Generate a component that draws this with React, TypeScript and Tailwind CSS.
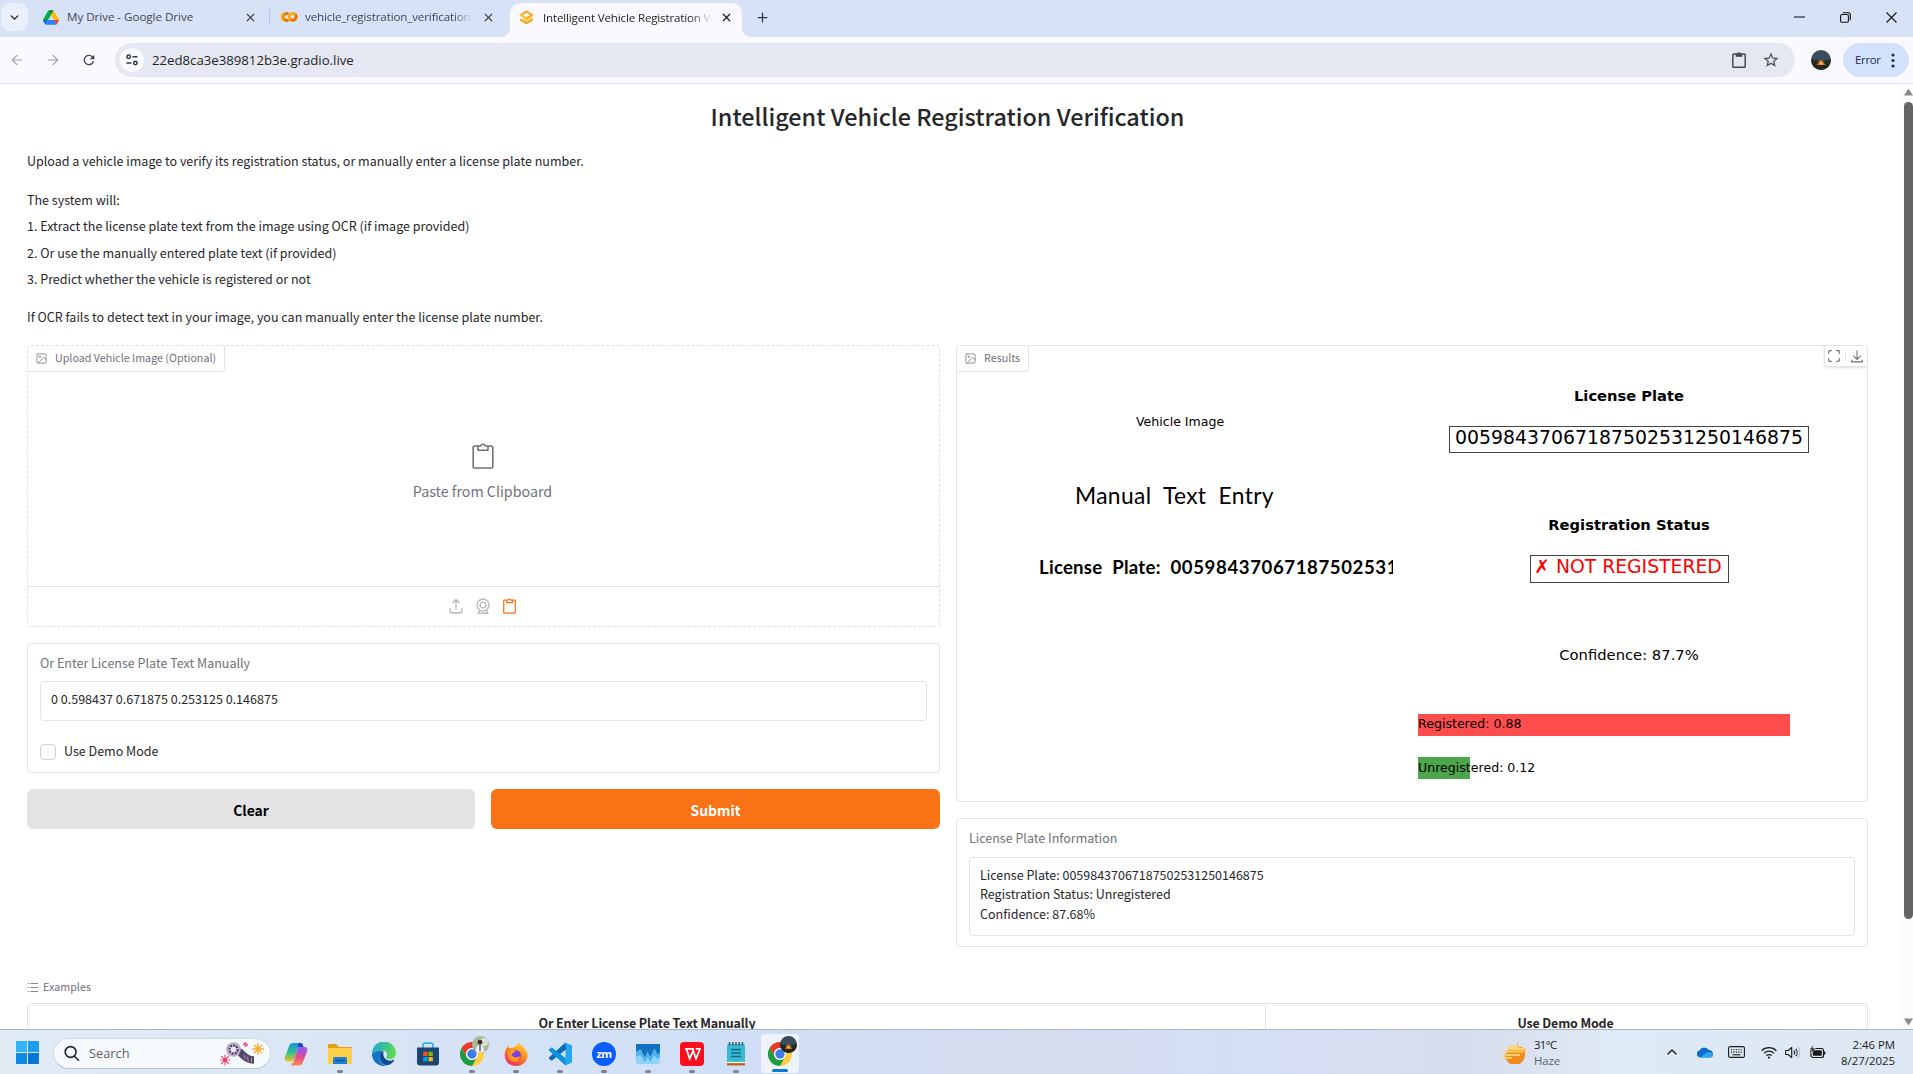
import type { ReactNode } from "react";
import { ArrowLeft, ArrowRight, ChevronDown, ChevronUp, Plus, X } from "lucide-react";

/* ---------- Browser chrome ---------- */

function DriveIcon() {
  return (
    <svg width="16" height="15" viewBox="0 0 87.3 78" className="shrink-0">
      <path d="m6.6 66.85 3.85 6.65c.8 1.4 1.95 2.5 3.3 3.3l13.75-23.8h-27.5c0 1.55.4 3.1 1.2 4.5z" fill="#0066da" />
      <path d="m43.65 25-13.75-23.8c-1.35.8-2.5 1.9-3.3 3.3l-25.4 44a9.06 9.06 0 0 0 -1.2 4.5h27.5z" fill="#00ac47" />
      <path d="m73.55 76.8c1.35-.8 2.5-1.9 3.3-3.3l1.6-2.75 7.65-13.25c.8-1.4 1.2-2.95 1.2-4.5h-27.5l5.85 11.5z" fill="#ea4335" />
      <path d="m43.65 25 13.75-23.8c-1.35-.8-2.9-1.2-4.5-1.2h-18.5c-1.6 0-3.15.45-4.5 1.2z" fill="#00832d" />
      <path d="m59.8 53h-32.3l-13.75 23.8c1.35.8 2.9 1.2 4.5 1.2h50.8c1.6 0 3.15-.45 4.5-1.2z" fill="#2684fc" />
      <path d="m73.4 26.5-12.7-22c-.8-1.4-1.95-2.5-3.3-3.3l-13.75 23.8 16.15 28h27.45c0-1.55-.4-3.1-1.2-4.5z" fill="#ffba00" />
    </svg>
  );
}

function ColabIcon() {
  return (
    <svg width="17" height="12" viewBox="0 0 17 12" className="shrink-0" fill="none" strokeWidth="2.7">
      <path d="M7.6 2.9A3.5 3.5 0 1 0 7.6 8.9" stroke="#e8710a" />
      <path d="M3 9.2A3.5 3.5 0 0 1 3 2.8" stroke="#f9ab00" />
      <circle cx="11.9" cy="5.9" r="3.6" stroke="#f9ab00" />
      <path d="M9.4 8.4A3.6 3.6 0 0 0 14.4 3.4" stroke="#e8710a" />
    </svg>
  );
}

function GradioIcon() {
  return (
    <svg width="15" height="15" viewBox="0 0 15 15" className="shrink-0" fill="none" strokeLinejoin="round" strokeLinecap="round">
      <path d="M7.5 1.6 1.8 5 7.5 8.3 13.2 5z" stroke="#ff9d12" strokeWidth="2" fill="#fff" />
      <path d="M1.8 5 7.5 8.300" stroke="#ffc938" strokeWidth="2" />
      <path d="M1.8 9.800 7.500 13.100l5.700-3.300" stroke="#ff9d12" strokeWidth="2" />
      <path d="M4.600 9 7.500 10.700 13 7.600" stroke="#ffc938" strokeWidth="1.500" />
    </svg>
  );
}

function TabStrip() {
  return (
    <div className="flex h-[37px] items-start bg-[#d8e2f6] text-[11.6px] text-[#3f4654]">
      <div className="ml-px mt-[3px] flex h-7 w-[27px] items-center justify-center rounded-[9px] bg-[#ebeffc]">
        <ChevronDown size={13} strokeWidth={2.6} color="#1f1f1f" />
      </div>
      <div className="ml-[15px] flex h-[34px] w-[214px] items-center">
        <DriveIcon />
        <span className="ml-2 flex-1 whitespace-nowrap tracking-[-0.03px]">My Drive - Google Drive</span>
        <X size={13} strokeWidth={2.2} color="#474747" />
      </div>
      <div className="ml-[12px] mt-[9px] h-4 w-px bg-[#a8c7fa]" />
      <div className="ml-[11px] flex h-[34px] w-[214px] items-center">
        <ColabIcon />
        <span className="ml-[7px] w-[168px] overflow-hidden whitespace-nowrap tracking-[-0.13px] [mask-image:linear-gradient(to_right,black_88%,transparent)]">
          vehicle_registration_verification.ipynb
        </span>
        <X size={13} strokeWidth={2.2} color="#474747" className="ml-[9px]" />
      </div>
      <div className="ml-[15px] mt-[3px] flex h-[34px] items-end">
        <svg width="9" height="9" viewBox="0 0 9 9" className="ml-[-9px]">
          <path d="M9 0v9H0a9 9 0 0 0 9-9z" fill="#f9f9ff" />
        </svg>
        <div className="flex h-[34px] w-[232px] items-center rounded-t-[10px] bg-[#f9f9ff] pb-[5px] pl-[9px] text-[#1f1f1f]">
          <GradioIcon />
          <span className="ml-[9px] w-[170px] overflow-hidden whitespace-nowrap tracking-[-0.17px] [mask-image:linear-gradient(to_right,black_86%,transparent)]">
            Intelligent Vehicle Registration Verification
          </span>
          <X size={13} strokeWidth={2.4} color="#1f1f1f" className="ml-[7px]" />
        </div>
        <svg width="9" height="9" viewBox="0 0 9 9">
          <path d="M0 0v9h9a9 9 0 0 1-9-9z" fill="#f9f9ff" />
        </svg>
      </div>
      <Plus size={15} strokeWidth={2} color="#303746" className="ml-[4px] mt-[10px]" />
      <div className="ml-auto mr-[16px] flex h-[34px] items-center gap-[35px]">
        <div className="h-[1.5px] w-[11px] bg-[#6b7280]" />
        <svg width="11" height="11" viewBox="0 0 11 11" fill="none" stroke="#111" strokeWidth="1.1">
          <rect x="0.6" y="2.5" width="7.8" height="7.8" rx="1.4" />
          <path d="M2.7 .7h5.3a2.3 2.3 0 0 1 2.3 2.3v5.3" />
        </svg>
        <svg width="11" height="11" viewBox="0 0 11 11" fill="none" stroke="#111" strokeWidth="1.1">
          <path d="M.5.5l10 10M10.5.5l-10 10" />
        </svg>
      </div>
    </div>
  );
}

function Toolbar() {
  return (
    <div className="flex h-[47px] items-center border-b border-[#dfe1ea] bg-[#f9f9ff]">
      <ArrowLeft size={16} strokeWidth={1.8} color="#a0a2a8" className="ml-[9px]" />
      <ArrowRight size={16} strokeWidth={1.8} color="#a0a2a8" className="ml-[20px]" />
      <svg width="16" height="16" viewBox="0 0 24 24" className="ml-[20px]" fill="#3f4654">
        <path d="M17.65 6.35A7.96 7.96 0 0 0 12 4a8 8 0 1 0 7.73 10h-2.08A6 6 0 1 1 12 6c1.66 0 3.14.69 4.22 1.78L13 11h7V4z" />
      </svg>
      <div className="ml-[18px] flex h-[34px] w-[1680px] items-center rounded-full bg-[#e5e8f3] pl-[5px] pr-[15px]">
        <div className="flex h-6 w-6 items-center justify-center rounded-full bg-[#fbfcff]">
          <svg width="14" height="14" viewBox="0 0 14 14" fill="none" stroke="#303746" strokeWidth="1.5">
            <circle cx="3.6" cy="3.8" r="1.7" />
            <path d="M7.4 3.8h5M1.4 10h5" />
            <circle cx="10.4" cy="10" r="1.7" />
          </svg>
        </div>
        <span className="ml-[8px] mt-px text-[13.2px] text-[#1f1f1f]">22ed8ca3e389812b3e.gradio.live</span>
        <svg width="14" height="16" viewBox="0 0 14 16" className="ml-auto" fill="none" stroke="#474a55" strokeWidth="1.5">
          <rect x="0.8" y="2" width="12.4" height="13.2" rx="0.8" />
          <path d="M3.6 1.6h6.8v3.2H3.6z" fill="#474a55" stroke="none" />
          <path d="M5.6 1.2h2.8" />
        </svg>
        <svg width="18" height="18" viewBox="0 0 24 24" className="ml-[16px]" fill="#474a55">
          <path d="M22 9.24l-7.19-.62L12 2 9.19 8.63 2 9.24l5.46 4.73L5.82 21 12 17.27 18.18 21l-1.63-7.03zM12 15.4l-3.76 2.27 1-4.28-3.32-2.88 4.38-.38L12 6.1l1.71 4.04 4.38.38-3.32 2.88 1 4.28z" />
        </svg>
      </div>
      <Campfire className="ml-[16px] size-5" />
      <div className="ml-[12px] flex h-[34px] w-[66px] items-center rounded-full bg-[#d3e1fd] pl-[12px] text-[11.4px] tracking-[-0.3px] text-[#1b2c50]">
        Error
        <svg width="4" height="15" viewBox="0 0 4 15" className="ml-auto mr-[14px]" fill="#1b2c50">
          <circle cx="2" cy="2" r="1.6" />
          <circle cx="2" cy="7.5" r="1.6" />
          <circle cx="2" cy="13" r="1.6" />
        </svg>
      </div>
    </div>
  );
}

function Campfire({ className }: { className: string }) {
  return (
    <svg viewBox="0 0 20 20" className={className}>
      <circle cx="10" cy="10" r="10" fill="#3a4d5c" />
      <path d="M.2 11 2 8l1.4 4L5 9l2 3.5h6L15 9l1.6 3L18 8l1.9 3A10 10 0 0 1 .2 11z" fill="#1c2a1f" />
      <path d="M1.4 15h17.2A10 10 0 0 1 1.4 15z" fill="#20261a" />
      <path d="M5.5 15 10 9.4l4.6 5.6z" fill="#f26a0f" />
      <path d="M8.3 14.6 10 11l1.9 3.6z" fill="#ffc23c" />
    </svg>
  );
}

/* ---------- Page ---------- */

function ImageIcon() {
  return (
    <svg width="11" height="11" viewBox="0 0 24 24" fill="none" stroke="#8b8b95" strokeWidth="2" strokeLinecap="round" strokeLinejoin="round">
      <rect x="2" y="2" width="20" height="20" rx="2" />
      <circle cx="8.2" cy="8.2" r="1.6" />
      <path d="M22 15l-5.5-5.5L4.5 22" />
    </svg>
  );
}

function BlockLabel({ children }: { children: ReactNode }) {
  return (
    <div className="flex h-[26px] w-max items-center self-start rounded-br-[4px] border-b border-r border-[#e4e4e7] pl-[8px] pr-[8px] text-[10.72px] text-[#71717a]">
      <ImageIcon />
      <span className="ml-[8px]">{children}</span>
    </div>
  );
}

function ClipboardIcon({ className }: { className: string }) {
  return (
    <svg viewBox="0 0 22 26" className={className} fill="none" stroke="currentColor" strokeLinejoin="round">
      <path d="M6 3H2.2A1 1 0 0 0 1.2 4v20a1 1 0 0 0 1 1h17.6a1 1 0 0 0 1-1V4a1 1 0 0 0-1-1H16" />
      <path d="M6 7.2V3h2.6a2.5 2.5 0 0 1 4.8 0H16v4.2z" />
    </svg>
  );
}

function UploadPanel() {
  return (
    <div className="flex h-[282px] flex-col rounded-[4px] border border-dashed border-[#e0e0e3]">
      <BlockLabel>Upload Vehicle Image (Optional)</BlockLabel>
      <div className="flex h-[214px] flex-col items-center pr-[2px] pt-[71px] text-[#71717a]">
        <ClipboardIcon className="h-[26px] w-[22px] stroke-[1.6]" />
        <div className="mt-[10px] text-[14.25px] leading-6">Paste from Clipboard</div>
      </div>
      <div className="flex flex-1 items-center justify-center gap-[13px] border-t border-[#e4e4e7] pb-[2px] pr-[2px] text-[#b9b9c0]">
        <svg width="14" height="16" viewBox="0 0 14 16" fill="none" stroke="currentColor" strokeWidth="1.4" strokeLinecap="round" strokeLinejoin="round">
          <path d="M1 10.5v3.3c0 .5.3.9.8.9h10.4c.5 0 .8-.4.8-.9v-3.3M7 10.8V1.6M3.9 4.6 7 1.5l3.1 3.1" />
        </svg>
        <svg width="14" height="16" viewBox="0 0 14 16" fill="none" stroke="currentColor" strokeWidth="1.4">
          <circle cx="7" cy="7" r="6" />
          <circle cx="7" cy="7" r="2.9" />
          <path d="M3.6 12.4 2.4 15.2h9.2l-1.2-2.8" />
        </svg>
        <ClipboardIcon className="h-[16px] w-[13px] stroke-[2.1] text-[#f97316]" />
      </div>
    </div>
  );
}

function ManualEntry() {
  return (
    <div className="flex h-[130px] flex-col rounded-[4px] border border-[#e4e4e7] px-[12px]">
      <div className="mt-[9px] h-[20px] text-[12.52px] leading-[20px] text-[#71717a]">Or Enter License Plate Text Manually</div>
      <div className="mt-[8px] flex h-[40px] items-start rounded-[4px] border border-[#e4e4e7] pl-[10px] pt-[7px] text-[12.54px] leading-[19px] text-[#27272a]">
        0 0.598437 0.671875 0.253125 0.146875
      </div>
      <div className="mt-[20px] flex h-[20px] items-center text-[12.52px] text-[#27272a]">
        <div className="mt-px size-[16px] rounded-[4px] border border-[#d4d4d8]" />
        <span className="ml-[8px]">Use Demo Mode</span>
      </div>
    </div>
  );
}

function ResultsFigure() {
  return (
    <div className="flex flex-1 font-['DejaVu_Sans',sans-serif] text-black">
      <div className="ml-[66px] flex w-[370px] flex-col overflow-hidden whitespace-nowrap">
        <div className="ml-[113px] mt-[40px] h-[20px] text-[12.55px] leading-[20px]">Vehicle Image</div>
        <div className="ml-[52px] mt-[47px] h-[32px] font-['Lato',sans-serif] text-[22.8px] leading-[32px] tracking-[0.35px] [word-spacing:6px]">
          Manual Text Entry
        </div>
        <div className="ml-[16px] mt-[42px] h-[28px] w-[354px] overflow-hidden font-['Lato',sans-serif] text-[18.6px] font-bold leading-[28px] tracking-[0.25px] [word-spacing:5px]">
          License Plate: <span className="tracking-[0.6px]">00598437067187502531</span>
        </div>
      </div>
      <div className="ml-[24px] flex w-[424px] flex-col items-center whitespace-nowrap">
        <div className="mt-[14px] h-[20px] text-[14.7px] font-bold leading-[20px]">License Plate</div>
        <div className="mt-[20px] h-[27px] w-[360px] border border-[#444] text-center text-[18.86px] leading-[21px]">
          00598437067187502531250146875
        </div>
        <div className="mt-[62px] h-[20px] text-[14.72px] font-bold leading-[20px]">Registration Status</div>
        <div className="mt-[20px] h-[28px] w-[199px] border border-[#444] pr-[2px] text-center text-[18.8px] leading-[22px] text-[#f00]">
          ✗ NOT REGISTERED
        </div>
        <div className="mt-[62px] h-[20px] text-[14.76px] leading-[20px]">Confidence: 87.7%</div>
        <div className="ml-px mt-[49px] h-[22px] w-[372px] self-start bg-[#ff4d4d] text-[12.58px] leading-[20px]">Registered: 0.88</div>
        <div className="ml-px mt-[21px] h-[22px] w-[52px] self-start bg-[#4ca64c] text-[12.58px] leading-[22px]">Unregistered: 0.12</div>
      </div>
    </div>
  );
}

function ResultsPanel() {
  return (
    <div className="flex h-[457px] flex-col overflow-hidden rounded-[4px] border border-[#e4e4e7]">
      <div className="flex items-start justify-between">
        <BlockLabel>Results</BlockLabel>
        <div className="flex h-[21px] w-[43px] items-center justify-center gap-[5px] rounded-bl-[4px] border-b border-l border-[#e4e4e7] pr-px text-[#71717a] shadow-sm">
          <svg width="12" height="12" viewBox="0 0 12 12" fill="none" stroke="currentColor" strokeWidth="1.2">
            <path d="M.7 3.8V1.5a.8.8 0 0 1 .8-.8h2.3M8.2.7h2.3a.8.8 0 0 1 .8.8v2.3M11.3 8.2v2.3a.8.8 0 0 1-.8.8H8.2M3.8 11.3H1.5a.8.8 0 0 1-.8-.8V8.2" />
          </svg>
          <div className="h-[10px] w-px bg-[#e4e4e7]" />
          <svg width="12" height="13" viewBox="0 0 12 13" fill="none" stroke="currentColor" strokeWidth="1.1">
            <path d="M6 .5v8.8M2.2 5.6 6 9.4l3.8-3.8M.7 9.8v2.1h10.6V9.8" />
          </svg>
        </div>
      </div>
      <ResultsFigure />
    </div>
  );
}

function InfoPanel() {
  return (
    <div className="h-[129px] rounded-[4px] border border-[#e4e4e7] px-[12px] pt-[9px] text-[12.5px]">
      <div className="h-[20px] leading-[20px] text-[#71717a]">License Plate Information</div>
      <div className="mt-[9px] h-[79px] rounded-[4px] border border-[#e4e4e7] pl-[10px] pt-[7px] leading-[19.4px] text-[#27272a]">
        <div>License Plate: 00598437067187502531250146875</div>
        <div>Registration Status: Unregistered</div>
        <div>Confidence: 87.68%</div>
      </div>
    </div>
  );
}

function Examples() {
  return (
    <div className="mt-[30px] flex min-h-0 flex-1 flex-col">
      <div className="flex h-[20px] items-center text-[10.75px] leading-[20px] text-[#71717a]">
        <svg width="11" height="11" viewBox="0 0 11 11" fill="none" stroke="#8b8b95" strokeWidth="1">
          <path d="M3.2 1.5H11M3.2 5.5H11M3.2 9.5H11M.6 1.5h1.2M.6 5.5h1.2M.6 9.5h1.2" />
        </svg>
        <span className="ml-[5px]">Examples</span>
      </div>
      <div className="mt-[6px] flex flex-1 overflow-hidden rounded-t-[4px] border-x border-t border-[#e4e4e7] px-px pt-px">
        <div className="flex flex-1 rounded-t-[3px] border-x border-t border-[#f4f4f5] text-[12.5px] font-bold leading-[20px] tracking-[-0.16px] text-[#27272a]">
          <div className="w-[1236px] border-r border-[#e4e4e7] pr-px pt-[7px] text-center">Or Enter License Plate Text Manually</div>
          <div className="flex-1 pt-[7px] text-center">Use Demo Mode</div>
        </div>
      </div>
    </div>
  );
}

function ScrollBar() {
  return (
    <div className="flex w-[13px] flex-col items-end bg-[#fcfcfc] pr-[0.5px]">
      <svg width="9" height="8" viewBox="0 0 9 8" className="mt-[4px]">
        <path d="M4.5.5 9 7.5H0z" fill="#8b8b8b" />
      </svg>
      <div className="mt-[6px] h-[817px] w-[9px] rounded-full bg-[#636363]" />
      <svg width="9" height="8" viewBox="0 0 9 8" className="mb-[3px] mt-auto">
        <path d="M4.5 7.5 9 .5H0z" fill="#8b8b8b" />
      </svg>
    </div>
  );
}

function Page() {
  return (
    <div className="flex h-[945px] bg-white font-['Noto_Sans_CJK_SC',sans-serif]">
      <main className="flex w-[1900px] flex-col pl-[27px] pr-[32px] text-[12.53px] text-[#27272a]">
        <h1 className="mt-[16px] h-[32px] text-center text-[23.4px] font-medium leading-[32px]">
          Intelligent Vehicle Registration Verification
        </h1>
        <p className="mt-[19px] h-[20px] leading-[20px]">
          Upload a vehicle image to verify its registration status, or manually enter a license plate number.
        </p>
        <p className="mt-[19px] h-[20px] leading-[20px]">The system will:</p>
        <ol className="mt-[3px] h-[80px] leading-[26.6px]">
          <li>1. Extract the license plate text from the image using OCR (if image provided)</li>
          <li>2. Or use the manually entered plate text (if provided)</li>
          <li>3. Predict whether the vehicle is registered or not</li>
        </ol>
        <p className="mt-[14px] h-[20px] leading-[20px]">
          If OCR fails to detect text in your image, you can manually enter the license plate number.
        </p>
        <div className="mt-[18px] grid h-[602px] grid-cols-[913px_912px] gap-[16px]">
          <div className="flex flex-col">
            <UploadPanel />
            <div className="h-4" />
            <ManualEntry />
            <div className="mt-[16px] grid h-[40px] grid-cols-[448px_449px] gap-[16px] text-[13.95px] font-bold">
              <button className="rounded-[6px] bg-[#e4e4e7] pt-[2px] text-black">Clear</button>
              <button className="rounded-[6px] bg-[#f97316] pt-[2px] text-white">Submit</button>
            </div>
          </div>
          <div className="flex flex-col gap-[16px]">
            <ResultsPanel />
            <InfoPanel />
          </div>
        </div>
        <Examples />
      </main>
      <ScrollBar />
    </div>
  );
}

/* ---------- Taskbar ---------- */

function TaskItem({ children, running }: { children: ReactNode; running?: boolean }) {
  return (
    <div className="flex h-[45px] w-[44px] flex-col items-center pt-[12px]">
      <div className="flex size-6 items-center justify-center">{children}</div>
      {running && <div className="mt-[4px] h-[3px] w-[6px] rounded-full bg-[#7c828c]" />}
    </div>
  );
}

function ChromeLogo({ children }: { children: ReactNode }) {
  return (
    <div className="relative size-6">
      <svg width="24" height="24" viewBox="0 0 24 24">
        <circle cx="12" cy="12" r="12" fill="#ffcd40" />
        <path d="M1.6 6A12 12 0 0 1 22.4 6H12a6 6 0 0 0-5.2 9z" fill="#e33b2e" />
        <path d="M1.6 6 6.8 15a6 6 0 0 0 10.4 0L12 24A12 12 0 0 1 1.6 6z" fill="#1e9a4b" />
        <circle cx="12" cy="12" r="6" fill="#fff" />
        <circle cx="12" cy="12" r="4.7" fill="#3b7ded" />
      </svg>
      <div className="absolute -top-[6px] left-[12px]">{children}</div>
    </div>
  );
}

function SearchArt() {
  return (
    <svg width="48" height="26" viewBox="0 0 48 26" fill="none">
      <path d="M20 11c4 1 5 8 15 8" stroke="#54456b" strokeWidth="7.5" />
      <path d="M25 13.500l1.500 5M28.500 15.500l.8 5M32.500 16.500v5" stroke="#a596bf" strokeWidth="1" />
      <circle cx="14.500" cy="8.500" r="7.300" fill="#b9abc9" />
      <circle cx="14.500" cy="8.500" r="4" stroke="#463a55" strokeWidth="2" strokeDasharray="2 1" fill="#e9e2f2" />
      <path d="M39 2v12M33 8h12M34.800 3.800l8.400 8.400M43.200 3.800l-8.400 8.400" stroke="#f7b13c" strokeWidth="1.400" />
      <circle cx="39" cy="8" r="2.600" fill="#f7b13c" />
      <path d="M6 13.500v11M.5 19h11M2 15l8 8M10 15l-8 8" stroke="#e8607f" strokeWidth="1.200" />
      <circle cx="6" cy="19" r="2.200" fill="#e0456a" />
      <path d="M26.500 1v5M24 3.500h5M24.800 1.800l3.500 3.500" stroke="#e8607f" strokeWidth="1.300" />
    </svg>
  );
}

function Taskbar() {
  return (
    <div className="flex h-[45px] border-t border-[#aab4c8] bg-[linear-gradient(90deg,#e0ebf4_0%,#dbe6f5_17%,#cfdff6_37%,#d6dcee_55%,#d3def5_64%,#d8dded_77%,#deeaf5_84%,#dde8f3_100%)]">
      <div className="ml-[16px] grid size-[23px] grid-cols-2 gap-px self-center">
        <div className="rounded-tl-[1px] bg-[#36b3f5]" />
        <div className="rounded-tr-[1px] bg-[#1b9cec]" />
        <div className="rounded-bl-[1px] bg-[#1089e0]" />
        <div className="rounded-br-[1px] bg-[#0676d4]" />
      </div>
      <div className="ml-[14px] mr-[3px] mt-[8px] flex h-[31px] w-[218px] items-center rounded-full border border-[#cdd8e6] border-b-[#b9c4d4] bg-[#f6fafd] pl-[9px] pr-[3px]">
        <svg width="17" height="17" viewBox="0 0 17 17" fill="none" stroke="#1f2328" strokeWidth="1.6" strokeLinecap="round">
          <circle cx="7.600" cy="7" r="5.400" />
          <path d="M11.500 11.200l4 4" />
        </svg>
        <span className="ml-[9px] text-[12.8px] text-[#5c6166]">Search</span>
        <div className="ml-auto">
          <SearchArt />
        </div>
      </div>

      <TaskItem>
        <svg width="24" height="24" viewBox="0 0 24 24">
          <defs>
            <linearGradient id="cpA" x1="0" y1="0" x2="0" y2="1">
              <stop offset="0" stopColor="#1a8fe8" />
              <stop offset="0.5" stopColor="#2fc08f" />
              <stop offset="1" stopColor="#f2c21c" />
            </linearGradient>
            <linearGradient id="cpB" x1="0" y1="0" x2="0" y2="1">
              <stop offset="0" stopColor="#8b5cf6" />
              <stop offset="0.5" stopColor="#e0489a" />
              <stop offset="1" stopColor="#ff8a50" />
            </linearGradient>
          </defs>
          <path d="M17 1H9C6.800 1 5.600 2.200 4.900 4.500L1 15c-1 2.800.5 4.500 2.800 4.500h4c1.600 0 2.300-1 2.800-2.500L14 5c.4-1.600 1-2 2.500-2z" fill="url(#cpA)" />
          <path d="M7.500 23.500H15c2.200 0 3.300-1.200 4-3.500L23 9.500c1-2.800-.5-4.500-2.800-4.500h-4c-1.600 0-2.300 1-2.800 2.500L10 19.500c-.4 1.600-1 2-2.500 2z" fill="url(#cpB)" />
          <path d="M13.500 6.500 15 1h1.500c2 0 2.500 2 3 4h-3c-1.600 0-2.300.5-3 1.500z" fill="#1546b8" />
        </svg>
      </TaskItem>
      <TaskItem running>
        <svg width="24" height="24" viewBox="0 0 24 24">
          <path d="M0 3.500A1.500 1.500 0 0 1 1.500 2H8l3 3h11.500A1.500 1.500 0 0 1 24 6.500V20H0z" fill="#e0a010" />
          <rect y="6" width="24" height="16" rx="1" fill="#ffcf4a" />
          <path d="M5 22v-5.500A1.500 1.500 0 0 1 6.500 15h11a1.500 1.500 0 0 1 1.500 1.500V22z" fill="#1d7fd0" />
          <path d="M7.500 18.500h9" stroke="#0e5ba6" strokeWidth="1.500" />
        </svg>
      </TaskItem>
      <TaskItem>
        <svg width="24" height="24" viewBox="0 0 24 24">
          <defs>
            <linearGradient id="edgeTop" x1="0" y1="0" x2="1" y2="0.300">
              <stop offset="0" stopColor="#1ea2e0" />
              <stop offset="1" stopColor="#58d957" />
            </linearGradient>
          </defs>
          <path d="M0 12A12 12 0 0 1 24 11c0 4-3 6-6.500 6-3 0-3.800-1.200-3-2.300C16 12 14.500 8.500 10 8.500 5 8.500 1.500 11 0 16z" fill="url(#edgeTop)" />
          <path d="M10 8.500C4 8.300 0 12 0 13a12 12 0 0 0 15 10.600C10 23 7.500 19.500 7.500 15.500c0-3.300 1.200-5.600 4-6.800z" fill="#1173c9" />
          <path d="M7.500 15c0 5 4.500 9 9 8 2.500-.8 4.700-2.800 5.800-4.700.3-.6-.3-.8-.7-.5C16.500 20.500 10 17 11.500 9 8.800 9.500 7.500 12 7.500 15z" fill="#0d4d91" />
        </svg>
      </TaskItem>
      <TaskItem>
        <svg width="24" height="24" viewBox="0 0 24 24">
          <path d="M7 6V2.900A1.700 1.700 0 0 1 8.700 1.200h6.600A1.700 1.700 0 0 1 17 2.900V6" fill="none" stroke="#2fb4ee" strokeWidth="1.800" />
          <path d="M1 5.500h22v15a3 3 0 0 1-3 3H4a3 3 0 0 1-3-3z" fill="#1d4573" />
          <path d="M7.200 9.700h4.300V14H7.200z" fill="#f25022" />
          <path d="M12.500 9.700h4.300V14h-4.300z" fill="#7fba00" />
          <path d="M7.200 15h4.300v4.300H7.200z" fill="#00a4ef" />
          <path d="M12.500 15h4.300v4.300h-4.300z" fill="#ffb900" />
        </svg>
      </TaskItem>
      <TaskItem running>
        <ChromeLogo>
          <svg width="17" height="17" viewBox="0 0 17 17">
            <circle cx="8.500" cy="8.500" r="8.500" fill="#a9b79d" />
            <circle cx="12" cy="6" r="4" fill="#d8dfd6" />
            <circle cx="8" cy="6.200" r="2.400" fill="#3a2b26" />
            <path d="M4 15.500c0-5 2-6.500 4-6.500s4 1.500 4 6.500a8.500 8.500 0 0 1-8 0z" fill="#f4f4f4" />
            <path d="M8 9v6" stroke="#333" strokeWidth="1.200" />
          </svg>
        </ChromeLogo>
      </TaskItem>
      <TaskItem running>
        <svg width="24" height="24" viewBox="0 0 24 24">
          <defs>
            <linearGradient id="ff" x1="0.800" y1="0" x2="0.200" y2="1">
              <stop offset="0" stopColor="#ffdf3a" />
              <stop offset="0.450" stopColor="#ff8a1f" />
              <stop offset="1" stopColor="#f0246e" />
            </linearGradient>
          </defs>
          <path d="M14.500 0c1.500 4 7.500 5.500 9 11.500C24.500 18.500 19 24 12 24S.5 19 .7 12.500C.8 8.500 3 5.500 4 3.500c.3 1.500.8 2.300 1.500 3C8 5 10 5.500 11 5c1.700-1 2.800-3 3.500-5z" fill="url(#ff)" />
          <circle cx="11.800" cy="13.500" r="5.200" fill="#7a3fe0" />
          <path d="M4 9c3-2 5 0 8 0-1 2-4 1.500-4.500 4 1.500 3 6.500 3 8.500 1 0 4-3 6-6.500 5.500C5 19 3 14 4 9z" fill="#ff9a20" />
        </svg>
      </TaskItem>
      <TaskItem running>
        <svg width="24" height="24" viewBox="0 0 24 24">
          <path d="M17.500.5 24 3.500v17l-6.500 3z" fill="#27a6f2" />
          <path d="M17.500.5 1.200 15.300c-.5.500-.5 1 0 1.500L3 18.300c.4.300.9.300 1.300 0L18 7.500z" fill="#0a6ab8" />
          <path d="M17.500 23.500 1.200 8.700c-.5-.5-.5-1 0-1.500L3 5.700c.4-.3.900-.3 1.300 0L18 16.500z" fill="#128fdc" />
        </svg>
      </TaskItem>
      <TaskItem running>
        <div className="flex size-6 items-center justify-center rounded-full bg-[#0b5cff] pb-[2px] text-[11px] font-bold leading-none tracking-[-0.5px] text-white">
          zm
        </div>
      </TaskItem>
      <TaskItem running>
        <svg width="24" height="20" viewBox="0 0 24 20">
          <rect width="24" height="20" rx="1.500" fill="#8ed4fb" />
          <path d="M0 0h24v8.500l-2.500 2.500-3-6.500-4 8.500-3-5-2.500 6-4.500-8.500L0 8z" fill="#1272c0" />
          <path d="M0 8.500 4.500 6 9 14l2.500-6 3 5 4-8.500L21.500 11 24 9v4l-3 2-3-4-3.500 7-3-5-2.500 5L4.500 11 0 13z" fill="#4fb1ef" />
        </svg>
      </TaskItem>
      <TaskItem running>
        <div className="flex size-6 items-center justify-center rounded-[4px] bg-[#fb0f1f]">
          <svg width="17" height="14" viewBox="0 0 18 14" fill="none" stroke="#fff" strokeWidth="1.900">
            <path d="M1 1.500h9.500M2.500 1.500l3.500 10.500 3.700-8.500 3 8.500L17 1.500h-4.500" />
          </svg>
        </div>
      </TaskItem>
      <TaskItem running>
        <svg width="20" height="24" viewBox="0 0 20 24">
          <rect x="1" y="2" width="18" height="21" rx="1.500" fill="#39b8cf" />
          <path d="M1 21h18v1.500a1 1 0 0 1-1 1H2a1 1 0 0 1-1-1z" fill="#b5651d" />
          <path d="M1 20.500h18" stroke="#f3f7f8" strokeWidth="1.300" />
          <path d="M3.500 0v3.500M6.800 0v3.500M10 0v3.500M13.200 0v3.500M16.500 0v3.500" stroke="#2b4f63" strokeWidth="1.300" />
          <path d="M5 7.500h10M5 11h10M5 14.500h10" stroke="#0d6f8a" strokeWidth="1.500" />
        </svg>
      </TaskItem>
      <div className="ml-[3px] mt-[4px] flex h-[39px] w-[38px] flex-col items-center rounded-[4px] bg-[#edf2fb] pt-[8px]">
        <ChromeLogo>
          <Campfire className="size-[17px]" />
        </ChromeLogo>
        <div className="mt-[3px] h-[3px] w-[16px] rounded-full bg-[#0a7bd6]" />
      </div>

      <div className="ml-auto flex items-center pr-[18px] text-[11.4px] text-[#1b1b1b]">
        <svg width="24" height="23" viewBox="0 0 24 23" fill="none">
          <path d="M15 0v5l6 2-1 3 3 3H12z" fill="#f59a23" />
          <path d="M2 14a9.700 9.700 0 0 0 20 0V8H6z" fill="#f28a1c" />
          <path d="M4 5.500h13M0 10.500h21M7 8h17M3 14h14M0 17h9" stroke="#ffd36b" strokeWidth="2" />
        </svg>
        <div className="ml-[7px] mt-[2px] w-[30px] leading-[16px]">
          <div className="tracking-[-0.65px]">31°C</div>
          <div className="tracking-[-0.1px] text-[#5c6166]">Haze</div>
        </div>
        <ChevronUp size={16} strokeWidth={2} className="ml-[100px]" />
        <svg width="17" height="11" viewBox="0 0 17 11" className="ml-[16px]">
          <path d="M4 10.500A3.700 3.700 0 0 1 3.500 3.300 5.300 5.300 0 0 1 12.800 3 4 4 0 0 1 17 7a3.500 3.500 0 0 1-3.500 3.500z" fill="#0f6cc9" />
          <path d="M3.500 10.500 11 5.500c2.500-.8 6 0 6 2.500a2.600 2.600 0 0 1-2.600 2.500z" fill="#28a8ee" />
        </svg>
        <svg width="17" height="12" viewBox="0 0 17 12" className="ml-[15px]" fill="none" stroke="#1b1b1b" strokeWidth="1.100">
          <rect x="0.600" y="0.600" width="15.800" height="10.800" rx="1.500" />
          <path d="M3 3.700h11M3 6.100h11" strokeDasharray="1.200 1.200" />
          <path d="M4.500 8.800h8" />
        </svg>
        <svg width="16" height="13" viewBox="0 0 16 13" className="ml-[16px]" fill="none" stroke="#1b1b1b" strokeWidth="1.200">
          <path d="M.6 4.800a10.300 10.300 0 0 1 14.800 0M3 7.300a7 7 0 0 1 10 0M5.300 9.700a3.800 3.800 0 0 1 5.400 0" />
          <circle cx="8" cy="11.600" r="1.100" fill="#1b1b1b" stroke="none" />
        </svg>
        <svg width="16" height="13" viewBox="0 0 16 13" className="ml-[8px]" fill="none" stroke="#1b1b1b" strokeWidth="1.100">
          <path d="M.6 4.500h2.600L6.700 1.300v10.400L3.200 8.500H.6z" strokeLinejoin="round" />
          <path d="M8.800 4.500a3 3 0 0 1 0 4M10.700 2.800a5.500 5.500 0 0 1 0 7.400" />
          <path d="M12.700 1a8 8 0 0 1 0 11" stroke="#b7bfc9" />
        </svg>
        <svg width="17" height="14" viewBox="0 0 17 14" className="ml-[8px]">
          <rect x="2" y="3.500" width="12.500" height="9" rx="2" fill="none" stroke="#1b1b1b" strokeWidth="1.200" />
          <rect x="3.800" y="5.300" width="9" height="5.400" rx="0.600" fill="#1b1b1b" />
          <path d="M15.600 6.500v3" stroke="#1b1b1b" strokeWidth="1.500" />
          <path d="M4.500 0 .5 4.800h2.700L2.200 8.500l4.300-5H3.800z" fill="#1b1b1b" stroke="#dde8f3" strokeWidth="0.500" />
        </svg>
        <div className="ml-[11px] mt-[2px] w-[58px] text-right leading-[16px]">
          <div>2:46 PM</div>
          <div>8/27/2025</div>
        </div>
      </div>
    </div>
  );
}

export default function App() {
  return (
    <div className="flex h-[1074px] w-[1913px] flex-col overflow-hidden font-['Open_Sans',sans-serif]">
      <TabStrip />
      <Toolbar />
      <Page />
      <Taskbar />
    </div>
  );
}
